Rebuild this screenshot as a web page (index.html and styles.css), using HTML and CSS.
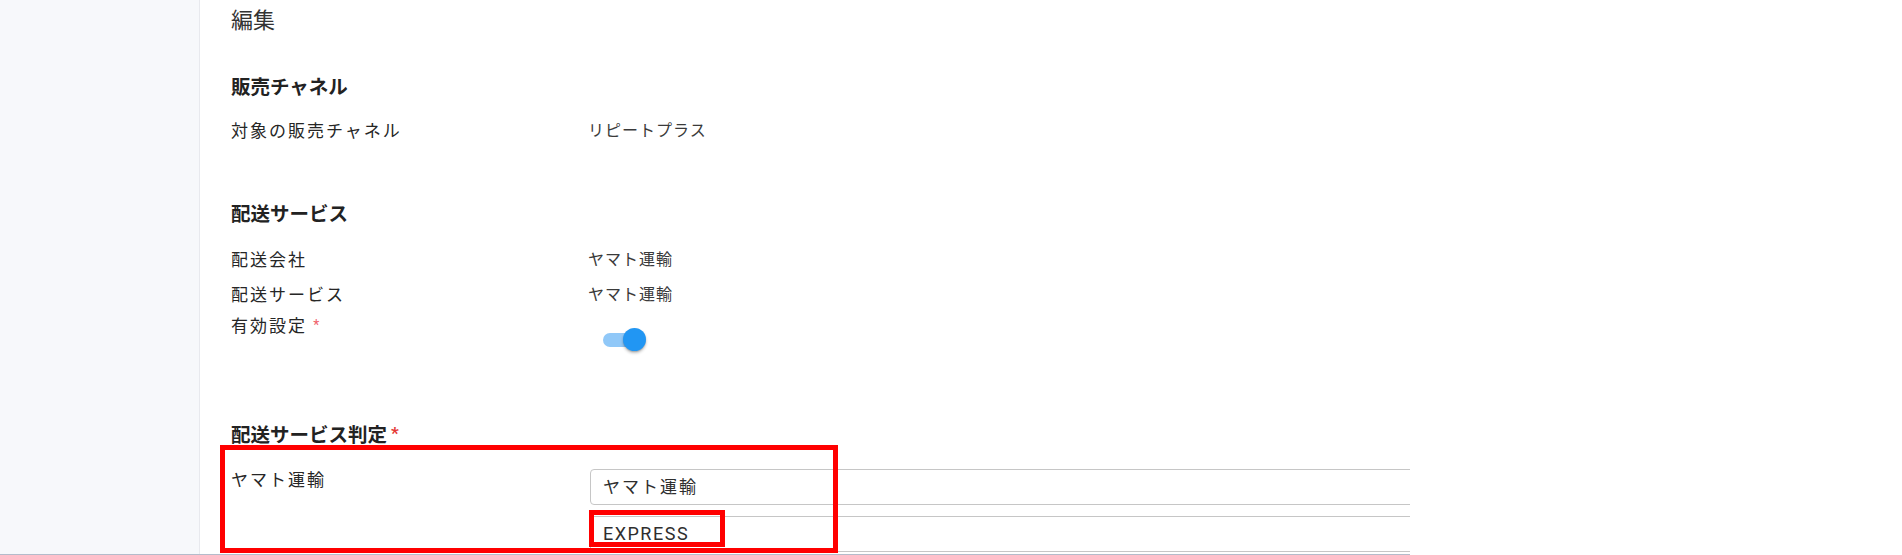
FILE: index.html
```html
<!DOCTYPE html>
<html lang="ja">
<head>
<meta charset="utf-8">
<title>編集</title>
<link rel="stylesheet" href="styles.css">
</head>
<body>
<div class="app">
  <aside class="sidebar"></aside>
  <main class="content">
    <h1 class="page-title">編集</h1>

    <section class="section section-channel">
      <h2 class="section-title">販売チャネル</h2>
      <div class="row">
        <div class="label">対象の販売チャネル</div>
        <div class="value">リピートプラス</div>
      </div>
    </section>

    <section class="section section-delivery">
      <h2 class="section-title">配送サービス</h2>
      <div class="row row-spaced">
        <div class="label">配送会社</div>
        <div class="value">ヤマト運輸</div>
      </div>
      <div class="row">
        <div class="label">配送サービス</div>
        <div class="value">ヤマト運輸</div>
      </div>
      <div class="row row-switch">
        <div class="label">有効設定 <span class="req-light">*</span></div>
        <div class="value">
          <div class="switch"><span class="switch-knob"></span></div>
        </div>
      </div>
    </section>

    <section class="section section-judge">
      <h2 class="section-title">配送サービス判定<span class="req">*</span></h2>
      <div class="row row-judge">
        <div class="label">ヤマト運輸</div>
        <div class="fields">
          <div class="field">ヤマト運輸</div>
          <div class="field field-latin">EXPRESS</div>
        </div>
      </div>
    </section>

    <div class="mark mark-row"></div>
    <div class="mark mark-field"></div>
  </main>
</div>
</body>
</html>
```

FILE: styles.css
```css
html, body {
  margin: 0;
  padding: 0;
  background: #ffffff;
}

body {
  font-family: Roboto, "Noto Sans CJK JP", sans-serif;
  color: #333333;
}

.app {
  display: flex;
  width: 1410px;
  height: 554px;
  border-bottom: 1px solid #b4bccb;
}

.sidebar {
  width: 200px;
  flex: 0 0 200px;
  background: #f7f8fb;
  border-right: 1px solid #e8e9ee;
  box-sizing: border-box;
}

.content {
  position: relative;
  flex: 1 1 auto;
  overflow: hidden;
  padding-left: 31px;
}

.page-title {
  margin: 0;
  font-size: 22px;
  line-height: 42px;
  font-weight: 400;
  color: #333333;
}

.section-title {
  margin: 0;
  font-size: 19.5px;
  line-height: 30px;
  font-weight: 700;
  color: #222222;
}

.section-channel {
  margin-top: 31px;
}

.section-channel .row {
  margin-top: 13px;
}

.section-delivery {
  margin-top: 54px;
}

.section-delivery .row-spaced {
  margin-top: 15px;
  margin-bottom: 5px;
}

.section-judge {
  margin-top: 58px;
}

.row {
  display: grid;
  grid-template-columns: 357px 1fr;
  line-height: 30px;
}

.label {
  font-size: 17px;
  letter-spacing: 2px;
  color: #262626;
}

.value {
  font-size: 16px;
  letter-spacing: 1px;
  color: #3a3a3a;
}

.req-light {
  color: #f0616b;
  font-size: 14px;
  vertical-align: 2px;
}

.req {
  color: #e53935;
  font-size: 17px;
  vertical-align: 3px;
  margin-left: 4px;
}

.row-switch {
  height: 50px;
}

.switch {
  position: relative;
  width: 34px;
  height: 14px;
  margin: 23px 0 0 15px;
  border-radius: 7px;
  background: #90c8f8;
}

.switch-knob {
  position: absolute;
  left: 20px;
  top: -5px;
  width: 23px;
  height: 23px;
  border-radius: 50%;
  background: #2196f3;
  box-shadow: 0 2px 3px rgba(0, 0, 0, 0.25), 0 1px 1px rgba(0, 0, 0, 0.12);
}

.row-judge {
  margin-top: 14px;
}

.fields {
  display: flex;
  flex-direction: column;
  gap: 11px;
  padding-top: 4px;
  padding-left: 2px;
}

.field {
  box-sizing: border-box;
  width: calc(100% + 20px);
  height: 36px;
  border: 1px solid #c6c6c6;
  border-radius: 4px;
  padding-left: 12px;
  line-height: 34px;
  font-size: 17px;
  letter-spacing: 2px;
  color: #2e2e2e;
}

.field-latin {
  font-size: 18px;
  letter-spacing: 1.5px;
}

.mark {
  position: absolute;
  box-sizing: border-box;
  border: 5px solid #ff0000;
}

.mark-row {
  left: 20px;
  top: 445px;
  width: 618px;
  height: 108px;
}

.mark-field {
  left: 389px;
  top: 510px;
  width: 136px;
  height: 37px;
}
```
